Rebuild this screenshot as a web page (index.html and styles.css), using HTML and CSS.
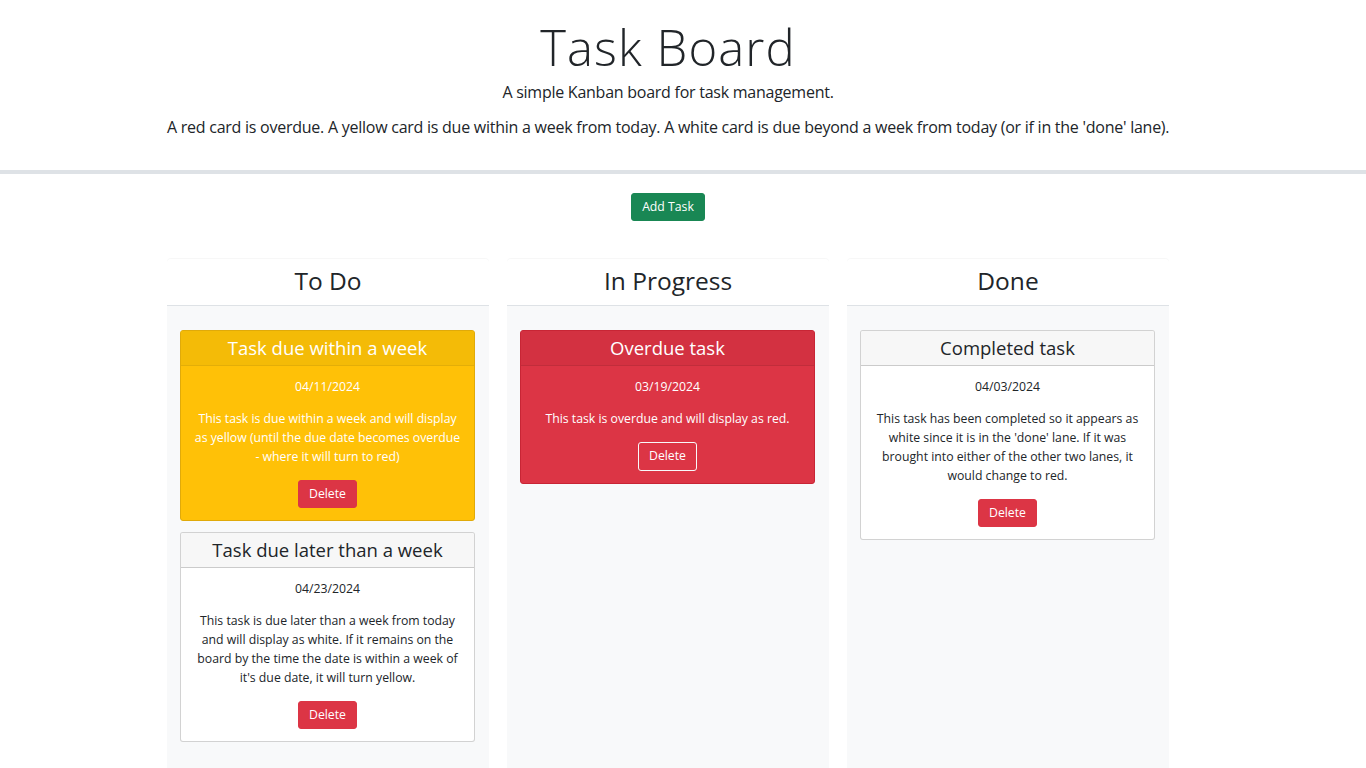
FILE: index.html
```html
<!DOCTYPE html>
<html lang="en">
<head>
<meta charset="utf-8">
<title>Task Board</title>
<link rel="stylesheet" href="styles.css">
</head>
<body>
<header class="hero">
  <div class="container">
    <h1 class="title">Task Board</h1>
    <p class="lead">A simple Kanban board for task management.</p>
    <p class="legend">A red card is overdue. A yellow card is due within a week from today. A white card is due beyond a week from today (or if in the 'done' lane).</p>
  </div>
</header>
<main class="container">
  <div class="actions">
    <button class="btn btn-success">Add Task</button>
  </div>
  <div class="board">
    <section class="lane">
      <div class="lane-head"><h2>To Do</h2></div>
      <div class="lane-body">
        <article class="card card-warning">
          <div class="card-head"><h3>Task due within a week</h3></div>
          <div class="card-body">
            <p class="date">04/11/2024</p>
            <p class="text">This task is due within a week and will display as yellow (until the due date becomes overdue - where it will turn to red)</p>
            <button class="btn btn-danger">Delete</button>
          </div>
        </article>
        <article class="card card-white">
          <div class="card-head"><h3>Task due later than a week</h3></div>
          <div class="card-body">
            <p class="date">04/23/2024</p>
            <p class="text">This task is due later than a week from today and will display as white. If it remains on the board by the time the date is within a week of it's due date, it will turn yellow.</p>
            <button class="btn btn-danger">Delete</button>
          </div>
        </article>
      </div>
    </section>
    <section class="lane">
      <div class="lane-head"><h2>In Progress</h2></div>
      <div class="lane-body">
        <article class="card card-danger">
          <div class="card-head"><h3>Overdue task</h3></div>
          <div class="card-body">
            <p class="date">03/19/2024</p>
            <p class="text">This task is overdue and will display as red.</p>
            <button class="btn btn-outline-light">Delete</button>
          </div>
        </article>
      </div>
    </section>
    <section class="lane">
      <div class="lane-head"><h2>Done</h2></div>
      <div class="lane-body">
        <article class="card card-white">
          <div class="card-head"><h3>Completed task</h3></div>
          <div class="card-body">
            <p class="date">04/03/2024</p>
            <p class="text">This task has been completed so it appears as white since it is in the 'done' lane. If it was brought into either of the other two lanes, it would change to red.</p>
            <button class="btn btn-danger">Delete</button>
          </div>
        </article>
      </div>
    </section>
  </div>
</main>
</body>
</html>
```
FILE: styles.css
```css
* { box-sizing: border-box; }
html, body { margin: 0; padding: 0; }
body {
  font-family: "Open Sans", "Noto Sans", sans-serif;
  color: #212529;
  background: #fff;
  font-size: 16px;
  line-height: 1.5;
}
.container {
  width: 1002px;
  margin-left: 167px;
}
.hero {
  border-bottom: 4px solid #dee2e6;
  padding: 18px 0 31px;
  text-align: center;
}
.title {
  margin: 0;
  font-size: 49px;
  font-weight: 300;
  letter-spacing: 1.1px;
  line-height: 1.2;
}
.lead {
  margin: 3px 0 0;
  font-size: 16px;
  letter-spacing: -0.25px;
}
.legend {
  margin: 11px 0 0;
  font-size: 16px;
  letter-spacing: -0.25px;
  white-space: nowrap;
}
.actions {
  display: flex;
  justify-content: center;
  padding-top: 19px;
}
.btn {
  font-family: inherit;
  font-size: 12.25px;
  line-height: 18px;
  height: 28px;
  padding: 4px 10px;
  border-radius: 3px;
  border: 1px solid transparent;
  color: #fff;
  cursor: pointer;
}
.btn-success { background: #198754; border-color: #198754; }
.btn-danger { background: #dc3545; border-color: #dc3545; }
.btn-outline-light { background: transparent; border-color: #f8f9fa; height: 29px; }
.board {
  display: grid;
  grid-template-columns: repeat(3, 322px);
  gap: 18px;
  margin-top: 38px;
}
.lane {
  background: #f8f9fa;
  border-radius: 4px 4px 0 0;
  box-shadow: 0 -1px 0 rgba(0,0,0,.03);
  min-height: 520px;
}
.lane-head {
  background: #fff;
  border-bottom: 1px solid #dee2e6;
  border-radius: 4px 4px 0 0;
  height: 47px;
  display: flex;
  align-items: center;
  justify-content: center;
  padding-bottom: 2px;
}
.lane-head h2 {
  margin: 0;
  font-size: 24.5px;
  font-weight: 400;
  line-height: 1.2;
}
.lane-body {
  padding: 24px 14px 26px 13px;
  display: flex;
  flex-direction: column;
  gap: 11px;
}
.card {
  border: 1px solid rgba(0,0,0,.175);
  border-radius: 3px;
  overflow: hidden;
  text-align: center;
}
.card-head {
  height: 35px;
  display: flex;
  align-items: center;
  justify-content: center;
  border-bottom: 1px solid rgba(0,0,0,.175);
  background: rgba(0,0,0,.03);
}
.card-head h3 {
  margin: 0;
  font-size: 18.5px;
  font-weight: 400;
  line-height: 1.2;
}
.card-body {
  padding: 12px 12px 12px;
  font-size: 12.25px;
  line-height: 1.55;
}
.date { margin: 0; }
.text { margin: 13px 0 13px; }
.card-warning { background: #ffc107; color: #fff; border-color: #e0aa0a; }
.card-warning .card-head { background: #f4bb07; border-bottom-color: #e3ae08; }
.card-danger { background: #dc3545; color: #fff; border-color: #c82535; }
.card-danger .card-head { background: #d33141; border-bottom-color: #c12d3b; }
.card-white { background: #fff; }
.card-white .card-head { background: #f7f7f7; }
```
